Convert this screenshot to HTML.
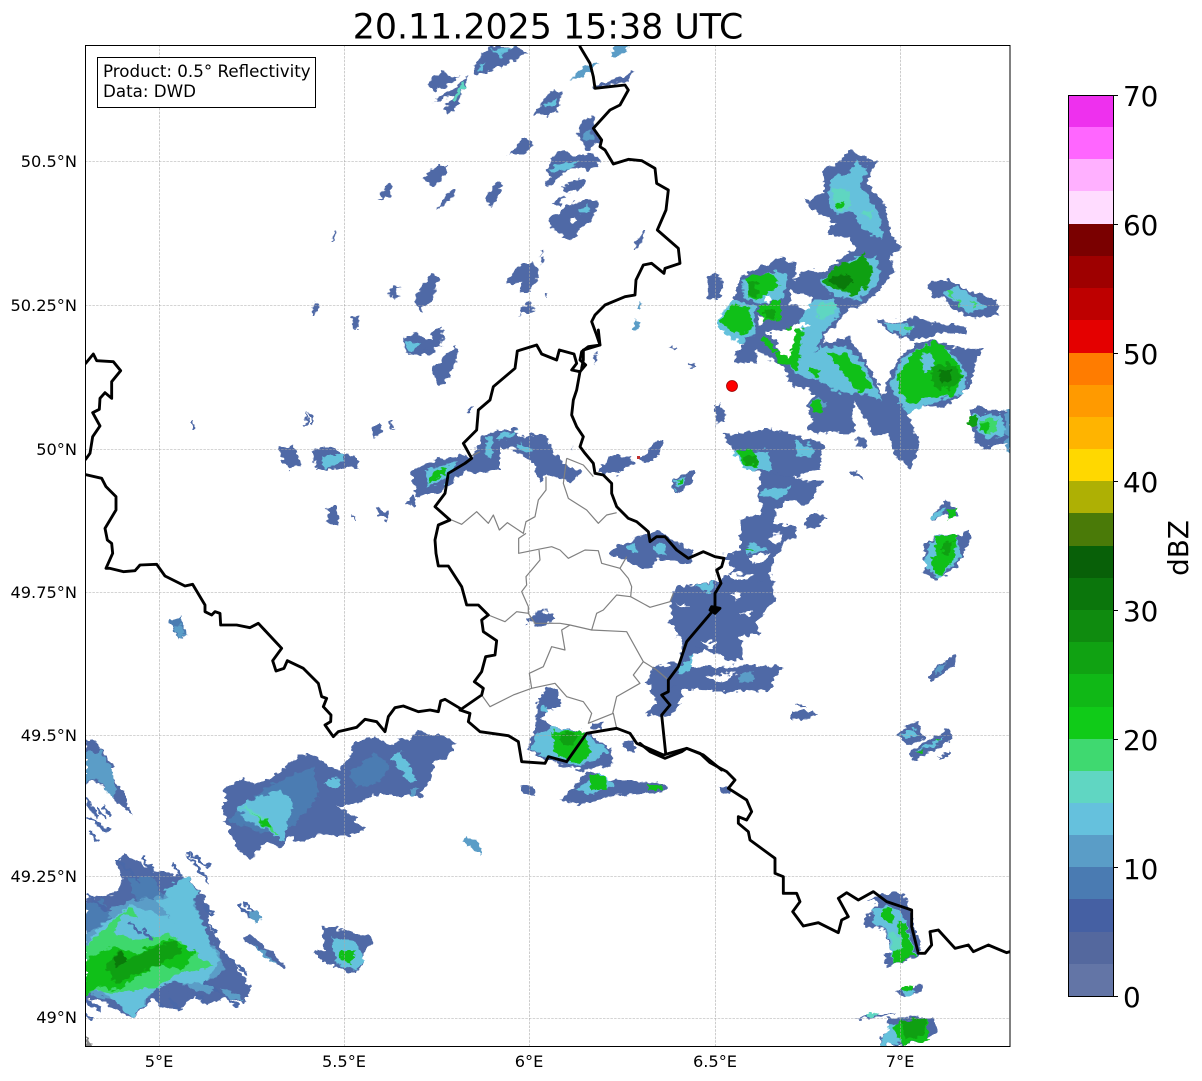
<!DOCTYPE html>
<html><head><meta charset="utf-8"><title>Radar</title>
<style>
html,body{margin:0;padding:0;background:#fff;width:1202px;height:1081px;overflow:hidden}
svg{display:block}
text{font-family:"DejaVu Sans",sans-serif;fill:#000}
.b{fill:#4f69a6}.m{fill:#4b7cb2}.s{fill:#5b9dc7}.t{fill:#65c1dc}.q{fill:#5fd6c1}.l{fill:#3ed86c}.g{fill:#10c018}.h{fill:#0fa012}.d{fill:#0a7a0a}.w{fill:#fff}
.lb{stroke:#4a68a8;stroke-width:9;fill:none;stroke-linecap:round}
.ls{stroke:#5b9dc7;stroke-width:9;fill:none}
.bd{fill:none;stroke:#000;stroke-width:8.600;stroke-linejoin:round;stroke-linecap:round}
.cn{fill:none;stroke:#808080;stroke-width:3.600;stroke-linejoin:round}
</style></head><body>
<svg width="1202" height="1081" viewBox="0 0 1202 1081" xmlns="http://www.w3.org/2000/svg">
<defs><clipPath id="ax"><rect x="85" y="45" width="925" height="1001"/></clipPath>
<filter id="rag" filterUnits="userSpaceOnUse" x="0" y="0" width="1202" height="1081" color-interpolation-filters="sRGB">
<feTurbulence type="fractalNoise" baseFrequency="0.14 0.2" numOctaves="2" seed="4" result="n"/>
<feDisplacementMap in="SourceGraphic" in2="n" scale="9" xChannelSelector="R" yChannelSelector="G"/>
</filter></defs>
<rect width="1202" height="1081" fill="#fff"/>
<g clip-path="url(#ax)"><g filter="url(#rag)">

<!-- SW region -->
<g transform="translate(80,720) scale(.33333)">
<path class="b" d="M17 55L40 60L100 135L85 150L125 215L155 285L100 235L85 210L40 180L17 195Z"/>
<path class="s" d="M17 100L60 90L95 150L110 215L95 235L50 170L17 190Z"/>
<path class="lb" d="M25 290L85 335M30 335L55 362M55 270L75 295M20 235L50 290M70 260L90 285"/>
<path class="b" d="M430 215L450 200L480 175L520 190L550 185L600 155L625 135L665 97L700 110L740 135L780 150L810 105L830 65L880 50L940 75L960 55L990 60L1010 32L1050 45L1090 45L1130 65L1100 115L1060 130L1050 180L1020 235L980 225L940 225L880 225L830 250L790 260L775 260L820 290L852 330L790 350L720 340L660 370L630 350L600 382L560 365L510 420L470 385L440 310L425 265L440 240Z"/>
<path class="m" d="M440 300L560 200L700 140L720 220L640 320L560 340Z"/>
<path class="m" d="M810 160L880 100L930 130L900 190L830 200Z"/>
<path class="t" d="M470 265L510 240L600 210L640 250L610 365L560 330L500 300Z"/>
<path class="q" d="M480 260L520 270L570 310L520 290Z"/>
<path class="l" d="M520 280L575 320L600 350L560 325Z"/>
<path class="g" d="M540 295L565 305L570 325L550 320Z"/>
<path class="t" d="M930 115L960 95L1010 180L990 190ZM745 175L785 180L770 205L730 195Z"/>
<path class="s" d="M985 205L1015 205L1005 230L990 230Z"/>
<path class="b" d="M17 535L60 530L110 520L125 480L110 430L135 405L180 430L240 460L290 460L330 480L370 525L395 580L380 620L405 640L430 700L500 760L465 735L515 805L495 850L440 830L380 855L345 825L310 860L250 865L215 835L160 895L60 840L17 840Z"/>
<path class="s" d="M17 600L160 540L330 510L380 640L460 780L380 820L250 770L190 860L100 840L17 820Z"/>
<path class="m" d="M140 470L220 470L250 530L170 540ZM17 550L70 540L90 600L17 640Z"/>
<path class="t" d="M60 620L150 555L290 600L420 720L380 790L300 790L230 800L160 895L100 840L60 810L17 820L17 680Z"/>
<path class="t" d="M250 510L320 470L360 520L320 560L280 570Z"/>
<path class="t" d="M230 540L330 530L390 660L420 730L350 700Z"/>
<path class="l" d="M17 680L100 600L150 560L180 600L280 650L400 740L300 760L230 800L120 820L50 810L17 830Z"/>
<path class="t" d="M130 580L200 600L260 640L170 660L100 640Z"/>
<path class="g" d="M17 720L100 680L170 700L270 655L345 695L310 750L240 735L170 770L120 810L60 800L17 830Z"/>
<path class="h" d="M70 740L115 695L140 720L200 690L290 660L300 700L230 740L170 760L110 790Z"/>
<path class="d" d="M100 715L125 695L140 725L110 740Z"/>
<path class="lb" d="M115 420L175 480M190 415L230 470M330 400L385 440M322 405L385 485M280 440L310 470M370 560L400 580M380 610L405 635M430 700L500 760M375 785L470 855M225 835L250 862M270 840L300 870M345 820L375 850M17 840L60 870M17 885L35 897M25 525L75 570"/>
<path class="lb" d="M150 610L180 640M190 630L215 660"/>
<path class="b" d="M255 790L290 780L330 820L300 855L260 820Z"/>
<path class="b" d="M380 790L450 735L515 805L490 850L430 825Z"/>
<path class="s" d="M420 800L470 820L490 845L440 830Z"/>
<path class="lb" d="M490 545L520 575M480 560L510 590"/>
<path class="s" d="M505 580L530 570L548 595L530 612Z"/>
<path class="b" d="M490 655L510 640L565 690L620 740L610 748L560 710Z"/>
<path class="s" d="M520 670L560 700L590 730L560 720Z"/>
<path class="b" d="M725 620L770 625L870 650L885 665L850 700L845 740L825 760L760 735L735 730L700 695L740 690L730 650Z"/>
<path class="t" d="M750 650L830 665L850 720L830 750L770 730Z"/>
<path class="g" d="M785 690L830 690L815 735L780 720Z"/>
<path class="s" d="M1145 365L1160 350L1200 370L1200 400Z"/>
<path fill="#888" d="M17 945L40 978L17 978Z"/>
</g>

<!-- NE region -->
<g transform="translate(700,140) scale(.33333)">
<path class="b" d="M445 30L530 65L510 100L505 135L555 190L570 280L605 325L570 350L585 390L560 420L540 450L480 500L445 500L410 560L370 580L375 610L450 590L480 640L525 710L550 770L565 715L590 655L650 610L710 600L770 625L850 625L820 680L810 740L740 800L640 800L625 830L660 920L630 985L590 960L565 880L525 890L490 830L460 780L465 880L380 880L320 875L340 840L320 800L340 760L330 745L280 740L240 670L200 650L170 625L170 670L100 650L130 610L60 565L60 530L100 490L120 410L190 380L240 350L290 370L280 420L300 400L340 390L370 400L410 365L445 340L465 325L445 290L385 290L390 260L410 250L340 210L315 180L375 155L370 90L420 65Z"/>
<path class="w" d="M270 450L330 470L345 520L305 505L270 490ZM200 575L270 570L300 545L330 560L290 570L270 650L240 640L230 600Z"/>
<path class="t" d="M395 110L440 105L470 60L500 90L480 140L540 230L550 300L490 270L460 220L400 220L385 170Z"/>
<path class="q" d="M395 140L450 150L450 210L410 210ZM480 215L520 215L510 240Z"/>
<path class="g" d="M405 190L435 190L430 205L410 205Z"/>
<path class="t" d="M360 420L470 350L530 350L540 420L480 480L400 470Z"/>
<path class="h" d="M370 420L420 370L470 365L490 335L520 395L500 440L470 470L430 455L380 435Z"/>
<path class="d" d="M385 420L440 400L460 420L430 450Z"/>
<path class="t" d="M240 650L310 520L345 480L400 480L420 530L370 570L345 640L360 620L440 620L490 670L550 780L480 760L420 760L350 720L290 700Z"/>
<path class="q" d="M350 490L410 490L400 530L360 540Z"/>
<path class="g" d="M260 560L310 570L300 620L295 690L250 670L220 650L280 600ZM380 640L430 640L490 690L520 740L480 760L430 700Z"/>
<path class="g" d="M190 590L235 630L225 640L185 605ZM330 680L360 690L350 710L325 695Z"/>
<path class="w" d="M200 575L270 570L290 550L330 555L290 570L270 650L240 640L230 600Z"/>
<path class="t" d="M50 540L100 480L165 500L165 580L120 610L60 570Z"/>
<path class="g" d="M60 540L100 490L150 510L160 560L130 590L90 570Z"/>
<path class="t" d="M125 420L225 395L265 400L250 480L170 490L130 470Z"/>
<path class="g" d="M140 410L225 400L235 440L170 480L145 470Z"/>
<path class="h" d="M145 425L170 420L170 470L145 465Z"/>
<path class="g" d="M170 500L240 480L245 540L195 545Z"/>
<path class="h" d="M190 510L225 505L225 535L195 535Z"/>
<path class="w" d="M195 465L215 465L215 485L195 485ZM170 530L190 530L190 550L175 550Z"/>
<path class="t" d="M600 660L700 605L760 640L800 700L790 760L720 780L620 820L570 740Z"/>
<path class="g" d="M590 710L640 640L710 600L750 640L790 700L760 770L690 770L630 790L600 760Z"/>
<path class="t" d="M660 650L700 630L700 690L670 690Z"/>
<path class="h" d="M690 680L760 670L790 710L750 750L700 740Z"/>
<path class="d" d="M715 690L755 690L750 720L725 725Z"/>
<path class="b" d="M680 435L745 415L800 450L890 480L895 530L800 530L760 510L730 470L700 470Z"/>
<path class="t" d="M730 460L770 440L860 500L810 520Z"/>
<path class="l" d="M735 455L755 450L760 475ZM815 480L830 490L820 510ZM765 475L785 490L780 505Z"/>
<path class="b" d="M530 540L600 545L650 530L700 550L800 560L800 580L720 580L640 600L570 580Z"/>
<path class="t" d="M555 545L640 555L630 585L570 575Z"/>
<path class="l" d="M618 555L635 555L635 575L618 575Z"/>
<path class="b" d="M810 810L835 800L925 820L930 900L850 930L820 890Z"/>
<path class="t" d="M815 825L900 825L925 880L860 900L830 870Z"/>
<path class="l" d="M840 840L890 835L890 880L850 875Z"/>
<path class="h" d="M805 835L835 830L830 860L810 858Z"/>
<path class="g" d="M840 850L865 845L860 878L840 875Z"/>
<path class="s" d="M915 810L932 805L932 940L920 935Z"/>
<path class="b" d="M25 405L50 395L70 430L60 470L25 480ZM105 640L130 640L135 670L105 665ZM40 800L60 790L80 840L50 855ZM470 890L495 890L500 925L470 920Z"/>
<path class="b" d="M70 880L130 880L200 865L280 885L370 910L360 990L250 1020L150 990L105 945Z"/>
<path class="t" d="M280 900L340 920L340 950L290 950ZM95 935L200 930L220 990L140 990Z"/>
<path class="g" d="M105 935L160 925L180 980L130 975Z"/>
<path class="h" d="M125 950L165 945L175 975L140 975Z"/>
<path class="b" d="M115 870L135 880L120 900Z"/>
<path class="s" d="M350 770L385 790L360 810L330 800Z"/>
<path class="g" d="M335 785L365 780L365 815L340 815Z"/>
</g>

<!-- South chain -->
<g transform="translate(640,440) scale(.33333)">
<path class="b" d="M360 100L440 110L500 120L550 125L500 195L440 180L410 210L400 250L460 260L465 290L430 310L395 370L385 410L400 440L400 480L350 550L360 580L300 590L310 640L265 660L210 630L160 640L140 680L230 680L320 675L430 680L380 710L385 750L250 755L215 740L125 740L125 780L90 830L15 825L50 790L25 730L50 680L120 665L130 590L105 590L140 570L90 550L110 510L90 490L105 440L180 430L250 420L280 390L250 345L300 330L310 290L300 240L360 230L370 190L355 170Z"/>
<path class="b" d="M105 440L400 420L405 480L350 550L360 580L300 590L310 660L265 665L130 600L90 550Z"/>
<path class="b" d="M40 680L430 680L385 750L250 755L125 745L20 730Z"/>
<path class="b" d="M300 240L410 210L400 250L470 260L465 290L430 310L395 370L390 420L250 420L280 390L250 345L300 330Z"/>
<path class="w" d="M400 280L430 285L420 310L385 300ZM170 650L240 640L260 665L170 675ZM180 610L230 600L220 625ZM200 710L290 700L250 730ZM320 350L390 340L380 360L340 375ZM270 400L340 405L320 420L280 420ZM110 495L150 495L130 505ZM270 465L300 460L290 480ZM300 515L340 515L320 530Z"/>
<path class="t" d="M320 315L345 310L380 330L320 345ZM125 680L160 640L150 690L110 700ZM360 150L450 140L430 180L370 170ZM170 435L225 425L210 460Z"/>
<path class="g" d="M320 325L350 330L320 335Z"/>
<path class="s" d="M300 700L340 695L340 725L300 725Z"/>
<path class="b" d="M450 815L490 810L535 825L500 838L450 838ZM495 240L525 215L560 235L525 265L500 265ZM630 95L650 90L670 120L640 110Z"/>
<path class="b" d="M100 125L160 90L155 125L120 160L100 150Z"/>
<path class="t" d="M100 125L130 110L125 145L105 150Z"/>
<path class="g" d="M105 125L125 115L120 135Z"/>
<path class="b" d="M875 225L920 180L960 225L930 235L915 225L880 245Z"/>
<path class="t" d="M875 225L915 200L905 230L880 240Z"/>
<path class="g" d="M920 210L950 205L945 230L925 235Z"/>
<path class="b" d="M850 320L890 285L960 285L990 275L990 300L950 380L885 425L850 395L865 370L850 350Z"/>
<path class="t" d="M860 330L890 285L950 290L960 350L900 415L860 385Z"/>
<path class="g" d="M885 290L950 285L945 350L905 410L880 395L870 360L890 350Z"/>
<path class="h" d="M910 310L945 300L925 345L905 340Z"/>
<path class="b" d="M870 710L885 685L945 645L945 670L905 705L870 725Z"/>
<path class="s" d="M885 690L925 665L905 695L885 705Z"/>
</g>

<!-- South east -->
<g transform="translate(640,700) scale(.33333)">
<path class="b" d="M770 105L800 75L830 65L855 115L800 135ZM810 150L860 125L925 85L940 100L930 125L820 185ZM890 170L930 155L930 165L895 180Z"/>
<path class="t" d="M775 105L820 85L835 110L795 115ZM825 155L880 125L915 110L890 135Z"/>
<path class="g" d="M830 155L850 150L845 160ZM885 120L905 115L900 125Z"/>
<path class="b" d="M685 600L760 575L800 590L805 620L845 745L825 770L740 800L730 765L750 755L740 690L710 685L670 675L675 645L695 640L700 620L720 610Z"/>
<path class="t" d="M695 625L750 615L790 640L825 760L765 790L750 760L745 690L705 680Z"/>
<path class="q" d="M750 690L790 720L790 760L760 765Z"/>
<path class="g" d="M725 625L755 620L760 665L730 660ZM770 670L795 665L815 740L825 765L765 790L755 755L790 745Z"/>
<path class="b" d="M760 875L850 850L850 875L790 890Z"/>
<path class="g" d="M790 865L820 855L815 872L790 875Z"/>
<path class="t" d="M790 875L820 870L815 885L795 888Z"/>
<path class="b" d="M640 955L770 935L740 950L700 955Z"/>
<path class="q" d="M675 945L715 938L710 950L680 952Z"/>
<path class="b" d="M720 1005L750 995L745 955L880 950L892 990L860 1020L800 1035L725 1035Z"/>
<path class="t" d="M725 1010L755 975L790 960L800 1030L725 1035Z"/>
<path class="g" d="M760 990L780 960L860 955L865 1020L790 1035Z"/>
<path class="h" d="M785 960L855 955L855 1010L795 1015Z"/>
<path class="b" d="M450 35L520 35L535 45L500 55L450 60ZM465 15L495 12L495 18L465 20ZM235 262L265 262L270 280L240 275Z"/>
<path class="b" d="M0 250L50 245L85 258L85 270L50 275L0 268Z"/>
<path class="g" d="M22 255L60 258L55 268L25 264Z"/>
</g>

<!-- Luxembourg region -->
<g transform="translate(420,330) scale(.33333)">
<path class="b" d="M0 410L60 385L130 395L150 385L200 310L285 295L300 320L380 310L395 360L440 410L485 425L460 455L420 445L380 435L360 460L340 400L290 360L240 350L240 420L180 430L120 420L95 465L0 495Z"/>
<path class="t" d="M10 440L60 400L120 405L80 440L80 470L20 480ZM230 320L290 300L290 315L240 330ZM290 340L340 355L320 365L290 355ZM200 320L218 320L215 380L195 375Z"/>
<path class="g" d="M15 460L50 420L70 420L40 465Z"/>
<path class="b" d="M535 415L590 370L650 400L590 430L540 430ZM660 385L710 330L730 330L725 360L690 400L670 400Z"/>
<path class="b" d="M755 455L810 425L825 420L815 460L775 490Z"/>
<path class="t" d="M760 455L795 440L780 475Z"/>
<path class="g" d="M770 455L785 450L775 465Z"/>
<path class="b" d="M570 660L640 625L720 600L770 640L820 660L810 700L710 690L700 710L660 715L620 690L575 680Z"/>
<path class="t" d="M620 650L640 635L650 660L625 665ZM700 645L735 640L740 675L705 670Z"/>
<path class="b" d="M340 860L365 835L410 865L375 890L320 880L320 860Z"/>
<path class="b" d="M350 1120L380 1070L420 1080L420 1130L380 1140L365 1170L400 1190L510 1210L575 1260L575 1310L480 1320L380 1290L320 1260L345 1200Z"/>
<path class="t" d="M345 1215L400 1190L505 1215L570 1265L480 1310L380 1280L330 1260ZM365 1125L385 1135L375 1150L360 1140Z"/>
<path class="g" d="M390 1205L490 1205L515 1270L480 1300L440 1295L410 1270Z"/>
<path class="h" d="M420 1210L470 1210L460 1250L430 1250Z"/>
<path class="b" d="M610 1240L640 1235L645 1265L620 1265Z"/>
<path class="b" d="M515 1180L550 1175L548 1195L515 1198ZM455 355L462 355L462 365L455 365Z"/>
</g>
<path class="b" d="M560 800L590 770L610 780L668 785L665 792L620 795L580 805ZM521 786L535 788L534 796L522 793Z"/>
<path class="t" d="M575 790L600 772L615 785L590 795Z"/>
<path class="g" d="M590 775L605 775L607 790L590 790ZM646 785L663 785L662 790L648 790Z"/>

<!-- top centre -->
<g transform="translate(300,40) scale(.33333)">
<path class="b" d="M515 85L570 20L640 20L685 35L620 75L530 105Z"/>
<path class="t" d="M570 30L640 20L600 50ZM530 85L555 65L545 90Z"/>
<path class="b" d="M380 130L430 90L440 115L480 110L405 155ZM400 185L470 140L490 120L510 110L480 170L480 190L445 220L430 210L460 170Z"/>
<path class="q" d="M455 180L490 125L495 140L465 185Z"/>
<path class="b" d="M700 225L750 155L785 155L785 200L745 225Z"/>
<path class="t" d="M730 195L770 170L770 190L735 210Z"/>
<path class="s" d="M805 125L860 75L900 70L860 100ZM930 40L950 15L985 20L975 40L935 50Z"/>
<path class="b" d="M920 125L1005 95L990 120L880 150L890 135Z"/>
<path class="b" d="M828 290L860 230L885 230L880 265L905 305L855 335L850 305Z"/>
<path class="s" d="M845 285L875 270L880 300L855 305Z"/>
<path class="b" d="M735 395L765 340L795 330L810 345L860 345L880 335L905 365L880 385L810 385L770 415L745 445L735 430L750 410Z"/>
<path class="t" d="M745 390L775 370L840 365L810 385L765 400Z"/>
<path class="b" d="M780 445L810 425L855 415L850 440L820 460L790 450ZM757 490L790 465L780 500Z"/>
<path class="b" d="M745 540L790 505L850 475L895 490L880 530L840 570L815 600L770 575L760 570Z"/>
<path class="t" d="M835 505L870 495L870 520L840 520Z"/>
<path class="w" d="M810 535L820 530L830 545L818 550Z"/>
<path class="b" d="M625 350L665 300L697 300L695 325L660 345L640 340ZM365 415L410 380L440 375L435 400L405 440ZM232 480L265 432L272 435L270 470L250 475ZM412 510L440 460L465 445L460 470L425 500ZM555 485L590 425L610 425L590 480L575 498ZM90 610L105 572L108 580L98 610ZM265 770L275 738L297 740L290 775L278 770ZM345 770L370 735L395 700L415 710L400 770L365 810L355 810ZM37 825L45 785L55 790L45 825ZM158 830L180 830L175 868L160 868ZM618 725L670 665L695 670L720 695L690 750L660 755L665 725L640 735ZM660 800L690 785L708 815L660 825ZM998 630L1030 570L1040 570L1015 625ZM725 650L740 655L720 670ZM722 635L730 630L720 650ZM735 762L742 762L740 772Z"/>
<path class="s" d="M995 870L1008 835L1020 850L1005 875ZM1010 805L1025 785L1025 805Z"/>
<path class="b" d="M310 895L345 880L395 900L400 870L425 860L430 905L385 945L340 945L315 930ZM420 975L470 915L475 930L460 990L395 990Z"/>
<path class="t" d="M315 915L380 910L370 930L325 930Z"/>
<path class="b" d="M880 945L895 940L885 975ZM1115 920L1130 920L1122 930ZM1165 970L1185 965L1190 985L1170 985Z"/>
</g>

<!-- west-centre -->
<g transform="translate(80,340) scale(.33333)">
<path class="b" d="M590 320L640 315L665 378L625 385L605 350ZM700 328L755 320L800 345L830 350L835 385L710 390L700 360Z"/>
<path class="t" d="M725 350L790 340L790 370L730 385Z"/>
<path class="b" d="M875 265L905 245L905 275L880 300ZM740 505L770 495L775 530L765 560L745 545ZM890 500L920 515L925 545L895 525ZM815 520L825 535L820 540ZM978 490L1000 465L1010 485L1000 505ZM336 240L342 240L342 268L336 268ZM677 220L683 220L685 258L677 258ZM690 220L696 225L698 260L690 258ZM930 240L936 240L938 270L932 270ZM1165 198L1173 198L1173 212L1165 212Z"/>
<path class="m" d="M270 840L300 830L323 885L295 898Z"/>
<path class="s" d="M285 860L305 855L318 885L297 895Z"/>
<path class="b" d="M970 0L1085 0L1060 20L1015 40L980 40ZM1055 85L1130 15L1135 30L1110 105L1080 140L1065 110Z"/>
<path class="t" d="M975 10L1020 8L1005 30L985 30Z"/>
<path class="b" d="M990 395L1060 360L1150 345L1180 350L1150 400L1095 430L1090 450L1010 470Z"/>
<path class="t" d="M1040 390L1130 365L1120 400L1085 420L1040 445Z"/>
<path class="g" d="M1040 430L1070 390L1100 385L1075 420Z"/>
</g>
</g></g>

<!-- gridlines -->
<g stroke="#aaa" stroke-width=".6" stroke-dasharray="2.5 1.2" fill="none">
<path d="M159.500 45V1046M344.500 45V1046M529.500 45V1046M715.500 45V1046M900.500 45V1046"/>
<path d="M85 161.500H1010M85 305.500H1010M85 449.500H1010M85 592.500H1010M85 735.500H1010M85 876.500H1010M85 1018.500H1010"/>
</g>

<g clip-path="url(#ax)">
<!-- admin lines -->
<g transform="translate(420,330) scale(.33333)" class="cn">
<path d="M95 570L125 583L170 545L205 580L220 555L238 600L262 578L310 610L318 575L345 560L355 510L378 480L378 440"/>
<path d="M440 385L430 460L445 505L500 540L535 580L560 555L590 548"/>
<path d="M150 380L180 365M440 385L490 405L520 440"/>
<path d="M318 610L296 625L296 670L355 658L395 650L420 660L445 685L495 660L535 662L545 700L600 715L625 745L635 770L632 800"/>
<path d="M600 715L620 680"/>
<path d="M357 660L360 690L335 720L318 740L320 765L305 785L325 830L325 850L290 845L255 875L205 855"/>
<path d="M632 800L590 795L550 840L530 850L515 900L450 885L425 900L435 960L395 950L370 1010L328 1030L335 1075L405 1060L440 1100L490 1115L515 1150L505 1180L580 1150L590 1195"/>
<path d="M325 850L345 880L420 880L450 885"/>
<path d="M515 900L620 905L670 995L640 1035L660 1060L590 1100L578 1150"/>
<path d="M670 995L710 1020L745 1050"/>
<path d="M632 800L690 832L750 815L760 790"/>
<path d="M335 1075L280 1095L210 1130L185 1095"/>
</g>
<!-- borders -->
<g transform="translate(80,340) scale(.33333)" class="bd">
<path d="M17 70L40 42L50 62L100 65L122 92L95 125L95 175L75 158L60 175L58 208L38 218L60 258L38 290L30 340L17 358"/>
<path d="M17 404L65 415L78 440L108 470L108 510L75 565L82 600L95 610L98 640L78 685L90 685L130 695L165 692L180 675L230 673L255 708L315 738L338 733L375 795L375 815L395 825L405 815L420 820L422 855L470 855L510 863L535 850L605 925L578 962L588 993L612 985L622 962L670 985L715 1030L725 1070L740 1075L730 1100L753 1125L752 1145L735 1155L760 1190L775 1175L830 1162L855 1138L890 1145L915 1175L925 1130L945 1103L970 1098L1015 1115L1050 1110L1075 1115L1082 1083L1095 1078L1140 1105"/>
</g>
<g transform="translate(420,330) scale(.33333)" class="bd">
<path d="M120 1140L185 1095L190 1075L163 1055L185 1025L197 980L225 975L230 932L190 905L185 870L205 855L175 825L140 825L125 770L85 708L55 708L48 670L45 630L55 585L90 570L45 530L75 490L85 430L135 400L155 385L130 340L170 300L175 240L210 210L220 170L285 115L292 63L350 45L365 72L410 90L418 60L462 72L470 100L455 120L480 125L497 105L480 90L485 65L505 50L540 45L535 0"/>
<path d="M480 125L470 180L460 210L455 255L470 290L490 320L480 350L495 370L520 400L525 430L550 435L575 460L575 490L590 530L625 565L650 575L685 605L690 635L710 620L735 620L770 660L805 685L850 665L885 680L912 685L905 710L890 720L903 760L885 790L885 835L800 935L775 1010L745 1050L745 1085L725 1095L750 1125L725 1155L737 1270"/>
<path d="M120 1140L150 1150L145 1175L180 1205L265 1217L295 1235L305 1295L375 1300L385 1280L440 1295L500 1210L590 1195L630 1210L650 1240L730 1275L800 1255L850 1275L905 1320"/>
<path d="M875 830L900 835L885 850L870 840Z" fill="#000"/>
</g>
<g transform="translate(640,700) scale(.33333)" class="bd">
<path d="M0 130L30 155L75 175L125 155L140 145L180 160L210 188L260 215L285 240L265 265L320 300L335 335L320 360L295 350L295 370L325 395L330 420L405 475L405 520L430 530L430 580L470 580L480 605L458 635L490 678L535 668L595 698L605 660L625 650L595 595L620 578L655 600L700 575L740 605L815 630L815 680L835 760L855 760L875 735L870 695L895 690L945 745L985 735L1000 755L1045 735L1100 758L1110 755"/>
</g>
<g transform="translate(300,40) scale(.33333)" class="bd">
<path d="M845 985L850 960L850 930L900 915L888 880L875 845L885 825L915 795L975 770L1005 765L1008 720L1030 675L1055 670L1092 700L1095 685L1140 670L1135 625L1072 570L1098 510L1105 450L1070 430L1065 385L1025 362L985 358L940 372L915 330L900 320L905 300L880 265L930 210L960 195L985 150L975 135L885 145L880 110L870 70L840 20"/>
</g>
<circle cx="732" cy="386" r="5.500" fill="#f00" stroke="#900" stroke-width=".8"/>
<path d="M637 456h3v3h-3z" fill="#c03030"/>
</g>

<!-- axes frame -->
<rect x="85.500" y="45.500" width="924.500" height="1001" fill="none" stroke="#000" stroke-width="1"/>

<!-- info box -->
<rect x="97.500" y="57.500" width="218" height="50" fill="#fff" stroke="#000" stroke-width="1"/>
<text x="103" y="77" font-size="16.700">Product: 0.5° Reflectivity</text>
<text x="103" y="97" font-size="16.700">Data: DWD</text>

<!-- title -->
<text x="548" y="38.500" font-size="34.800" text-anchor="middle">20.11.2025 15:38 UTC</text>

<!-- lat labels -->
<g font-size="16.200" text-anchor="end">
<text x="77" y="167">50.5°N</text>
<text x="77" y="311">50.25°N</text>
<text x="77" y="455">50°N</text>
<text x="77" y="598">49.75°N</text>
<text x="77" y="741">49.5°N</text>
<text x="77" y="882">49.25°N</text>
<text x="77" y="1023">49°N</text>
</g>
<g font-size="16.200" text-anchor="middle">
<text x="159" y="1067">5°E</text>
<text x="344" y="1067">5.5°E</text>
<text x="529" y="1067">6°E</text>
<text x="715" y="1067">6.5°E</text>
<text x="900" y="1067">7°E</text>
</g>

<!-- colorbar -->
<g shape-rendering="crispEdges">
<rect x="1068" y="95" width="45" height="33" fill="#ee30ee"/>
<rect x="1068" y="127" width="45" height="33" fill="#ff66ff"/>
<rect x="1068" y="159" width="45" height="33" fill="#ffb0ff"/>
<rect x="1068" y="191" width="45" height="33" fill="#ffdcff"/>
<rect x="1068" y="224" width="45" height="33" fill="#7a0000"/>
<rect x="1068" y="256" width="45" height="33" fill="#9e0000"/>
<rect x="1068" y="288" width="45" height="33" fill="#be0000"/>
<rect x="1068" y="320" width="45" height="33" fill="#e40000"/>
<rect x="1068" y="353" width="45" height="33" fill="#ff7c00"/>
<rect x="1068" y="385" width="45" height="33" fill="#ff9a00"/>
<rect x="1068" y="417" width="45" height="33" fill="#ffb400"/>
<rect x="1068" y="449" width="45" height="33" fill="#ffd800"/>
<rect x="1068" y="481" width="45" height="33" fill="#aeb004"/>
<rect x="1068" y="513" width="45" height="33" fill="#4a7a08"/>
<rect x="1068" y="546" width="45" height="33" fill="#086008"/>
<rect x="1068" y="578" width="45" height="33" fill="#0b760c"/>
<rect x="1068" y="610" width="45" height="33" fill="#0f8b0f"/>
<rect x="1068" y="642" width="45" height="33" fill="#10a212"/>
<rect x="1068" y="674" width="45" height="33" fill="#10b816"/>
<rect x="1068" y="707" width="45" height="33" fill="#10cb18"/>
<rect x="1068" y="739" width="45" height="33" fill="#3fd970"/>
<rect x="1068" y="771" width="45" height="33" fill="#60d6c2"/>
<rect x="1068" y="803" width="45" height="33" fill="#65c1dd"/>
<rect x="1068" y="835" width="45" height="33" fill="#5a9dc7"/>
<rect x="1068" y="867" width="45" height="33" fill="#4a7bb2"/>
<rect x="1068" y="899" width="45" height="33" fill="#4560a3"/>
<rect x="1068" y="932" width="45" height="33" fill="#54689e"/>
<rect x="1068" y="964" width="45" height="32" fill="#6375a6"/>
</g>
<rect x="1068.500" y="95.500" width="45" height="901" fill="none" stroke="#000" stroke-width="1"/>
<g stroke="#000" stroke-width="1">
<path d="M1113 95.500h5M1113 224.500h5M1113 353.500h5M1113 481.500h5M1113 610.500h5M1113 739.500h5M1113 867.500h5M1113 996.500h5"/>
</g>
<g font-size="27.800">
<text x="1123" y="106">70</text>
<text x="1123" y="235">60</text>
<text x="1123" y="364">50</text>
<text x="1123" y="492">40</text>
<text x="1123" y="621">30</text>
<text x="1123" y="750">20</text>
<text x="1123" y="879">10</text>
<text x="1123" y="1007">0</text>
</g>
<text transform="translate(1188,548) rotate(-90)" font-size="27.800" text-anchor="middle">dBZ</text>
</svg>
</body></html>
